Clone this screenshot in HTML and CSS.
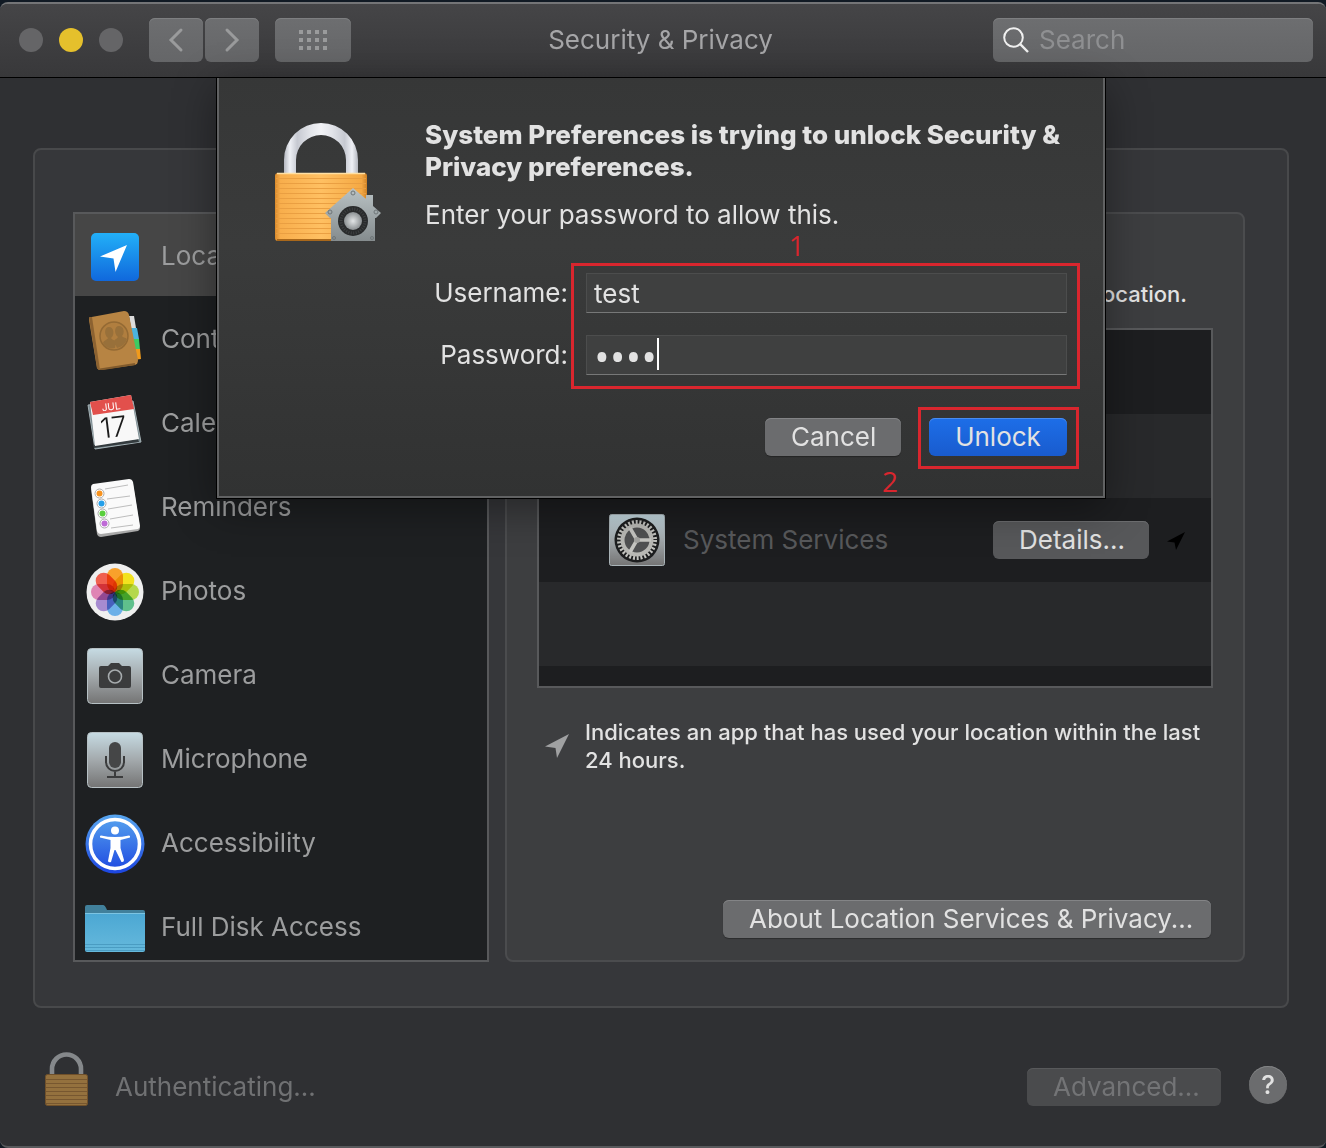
FILE: index.html
```html
<!DOCTYPE html>
<html lang="en">
<head>
    <meta charset="UTF-8">
    <meta name="viewport" content="width=device-width, initial-scale=1.0">
    <title>Security &amp; Privacy</title>
    <link rel="stylesheet" href="styles.css">
</head>
<body>

    <div class="window">

        <header class="titlebar">
            <div class="lights">
                <span class="light"></span>
                <span class="light light-minimize"></span>
                <span class="light"></span>
            </div>
            <div class="nav">
                <button type="button" class="tool" aria-label="Back">
                    <svg width="16" height="26" viewBox="0 0 16 26"><path d="M13 3 3 13l10 10" fill="none" stroke="#9a9b9c" stroke-width="3" stroke-linecap="round"/></svg>
                </button>
                <button type="button" class="tool" aria-label="Forward">
                    <svg width="16" height="26" viewBox="0 0 16 26"><path d="M3 3l10 10L3 23" fill="none" stroke="#9a9b9c" stroke-width="3" stroke-linecap="round"/></svg>
                </button>
            </div>
            <button type="button" class="tool tool-wide" aria-label="Show All">
                <svg width="28" height="20" viewBox="0 0 28 20"><path d="M0 2h28M0 10h28M0 18h28" stroke="#9a9b9c" stroke-width="4" stroke-dasharray="4 4"/></svg>
            </button>
            <h1>Security &amp; Privacy</h1>
            <div class="search">
                <svg width="26" height="26" viewBox="0 0 26 26"><circle cx="10.500" cy="10.500" r="9.300" fill="none" stroke="#f0f0f0" stroke-width="2"/><path d="M17.200 17.200 25 25" stroke="#f0f0f0" stroke-width="2.400"/></svg>
                <input type="text" placeholder="Search" aria-label="Search">
            </div>
        </header>

        <main class="panel">
            <ul class="sidebar">
                <li class="selected">
                    <svg width="60" height="60" viewBox="0 0 60 60">
                        <defs><linearGradient id="locBg" x1="0" y1="0" x2="0" y2="1"><stop offset="0" stop-color="#22b0f8"/><stop offset="1" stop-color="#1068dc"/></linearGradient></defs>
                        <rect x="6" y="6" width="48" height="48" rx="5" fill="url(#locBg)"/>
                        <path d="M42 18 30.500 45 28.500 31.500 15 29.500z" fill="#fff"/>
                    </svg>
                    <span>Location Services</span>
                </li>
                <li>
                    <svg width="60" height="60" viewBox="0 0 60 60">
                        <path d="M44 6h5l2 12h-5z" fill="#dcdcdc"/>
                        <path d="M45 18h7l2 11h-7z" fill="#4bb3dd"/>
                        <path d="M46 29h8l1 11h-7z" fill="#3fcb62"/>
                        <path d="M48 39h7l1 10-8 1z" fill="#f09a1c"/>
                        <path d="M4 7.500 39 1q4 0 5 4l9 45q0 4-3 5L15 60q-2 0-3-2L4 10z" fill="#b78443"/>
                        <path d="M4 7.500 7 7l8 53q-2 0-3-2z" fill="#8c6231"/>
                        <path d="M15 59.500 50 54" stroke="#805a2c" stroke-width="2"/>
                        <circle cx="29" cy="26" r="14" fill="#b07e3f" stroke="#946a34" stroke-width="1.500"/>
                        <path d="M18 33c1-3 4-3 5-5-4-3-4-11 1-11s6 8 2 11c1 2 4 2 5 4l-1 6q-8 2-12-5zM29 31c1-2 3-2 4-4-4-3-4-11 1-11s6 7 3 10c1 2 3 1 5 3q-2 7-10 9z" fill="#98703a"/>
                    </svg>
                    <span>Contacts</span>
                </li>
                <li>
                    <svg width="60" height="60" viewBox="0 0 60 60">
                        <path d="M3 11 48 7l8 41-46 7z" fill="#7b8b91" stroke="#a4b1b5"/>
                        <path d="M8 51 53 45l1 3-45 6z" fill="#343b3e"/>
                        <path d="M5 8 46 1l8 44-44 7z" fill="#f8f8f8"/>
                        <path d="M5 8 46 1l3 14L8 21z" fill="#e2504c"/>
                        <g transform="rotate(-7 28 28)" fill="#fff" font-family="Inter, sans-serif">
                            <text x="28" y="16" font-size="10" text-anchor="middle">JUL</text>
                            <text x="28" y="43" font-size="28" font-weight="300" text-anchor="middle" fill="#1b1b1b">17</text>
                        </g>
                    </svg>
                    <span>Calendars</span>
                </li>
                <li>
                    <svg width="60" height="60" viewBox="0 0 60 60">
                        <path d="M8 8 44 3q3 0 4 3l7 44q0 2-2 3l-37 6q-3 0-4-3L6 11q0-2 2-3z" fill="#a9a9a9"/>
                        <path d="M8 6 44 1q3 0 4 3l7 44q0 2-2 3l-37 5q-3 0-4-3L6 9q0-2 2-3z" fill="#fafafa"/>
                        <path d="M20 11 43 7M22 21l23-3M23 31l24-4M25 41l23-4M26 50l22-3" stroke="#bdbdbd"/>
                        <g fill="#fff" stroke="#aaa"><circle cx="14.500" cy="15.500" r="4.500"/><circle cx="16.500" cy="25.500" r="4.500"/><circle cx="17.500" cy="35.500" r="4.500"/><circle cx="19.500" cy="45.500" r="4.500"/></g>
                        <circle cx="14.500" cy="15.500" r="3" fill="#f6921e"/><circle cx="16.500" cy="25.500" r="3" fill="#259fe9"/><circle cx="17.500" cy="35.500" r="3" fill="#59cf3c"/><circle cx="19.500" cy="45.500" r="3" fill="#bf6bd6"/>
                    </svg>
                    <span>Reminders</span>
                </li>
                <li>
                    <svg width="60" height="60" viewBox="0 0 60 60">
                        <circle cx="30" cy="30" r="28.500" fill="#efefef"/>
                        <g class="petals">
                            <rect x="22" y="6" width="16" height="24" rx="8" fill="#f9a12b"/>
                            <rect x="22" y="6" width="16" height="24" rx="8" fill="#f2e21f" transform="rotate(45 30 30)"/>
                            <rect x="22" y="6" width="16" height="24" rx="8" fill="#b5d84c" transform="rotate(90 30 30)"/>
                            <rect x="22" y="6" width="16" height="24" rx="8" fill="#5fc08c" transform="rotate(135 30 30)"/>
                            <rect x="22" y="6" width="16" height="24" rx="8" fill="#6cb0e8" transform="rotate(180 30 30)"/>
                            <rect x="22" y="6" width="16" height="24" rx="8" fill="#a68bd0" transform="rotate(225 30 30)"/>
                            <rect x="22" y="6" width="16" height="24" rx="8" fill="#df85b4" transform="rotate(270 30 30)"/>
                            <rect x="22" y="6" width="16" height="24" rx="8" fill="#f0604f" transform="rotate(315 30 30)"/>
                        </g>
                    </svg>
                    <span>Photos</span>
                </li>
                <li>
                    <svg width="60" height="60" viewBox="0 0 60 60">
                        <defs><linearGradient id="steel" x1="0" y1="0" x2="0" y2="1"><stop offset="0" stop-color="#c6dbe3"/><stop offset="0.500" stop-color="#a3a9ac"/><stop offset="1" stop-color="#747474"/></linearGradient></defs>
                        <rect x="2.500" y="2.500" width="55" height="55" rx="4" fill="url(#steel)" stroke="#b6c0c4"/>
                        <path d="M16 20h7l3-3h8l3 3h7q2 0 2 2v18q0 2-2 2H16q-2 0-2-2V22q0-2 2-2z" fill="#3b3c3d"/>
                        <circle cx="30" cy="30.500" r="6.500" fill="none" stroke="#a6abad" stroke-width="1.600"/>
                    </svg>
                    <span>Camera</span>
                </li>
                <li>
                    <svg width="60" height="60" viewBox="0 0 60 60">
                        <rect x="2.500" y="2.500" width="55" height="55" rx="4" fill="url(#steel)" stroke="#b6c0c4"/>
                        <rect x="24" y="12" width="12" height="26" rx="6" fill="#454647"/>
                        <path d="M21 26v6a9 9 0 0 0 18 0v-6M30 41v6M22 47h16" fill="none" stroke="#3b3c3d" stroke-width="2"/>
                    </svg>
                    <span>Microphone</span>
                </li>
                <li>
                    <svg width="60" height="60" viewBox="0 0 60 60">
                        <defs><linearGradient id="accBg" x1="0" y1="0" x2="0" y2="1"><stop offset="0" stop-color="#58a6ef"/><stop offset="1" stop-color="#1c45e0"/></linearGradient></defs>
                        <circle cx="30" cy="30" r="29.500" fill="url(#accBg)"/>
                        <circle cx="30" cy="30" r="24.500" fill="none" stroke="#fff" stroke-width="3.600"/>
                        <circle cx="30" cy="16.500" r="4" fill="#fff"/>
                        <path d="M16 21.500q14 3 28 0 1.500 0 1 2l-9.500 2.500v8l3.500 12q0 2.500-2.500 2L30.500 36h-1L26 48q-2.500 1-3-1l2.500-13v-8L15 23.500q-.5-2 1-2z" fill="#fff"/>
                    </svg>
                    <span>Accessibility</span>
                </li>
                <li>
                    <svg width="60" height="60" viewBox="0 0 60 60">
                        <defs><linearGradient id="folderBg" x1="0" y1="0" x2="0" y2="1"><stop offset="0" stop-color="#4ba7d3"/><stop offset="1" stop-color="#66b9dc"/></linearGradient></defs>
                        <path d="M0 9q0-2 2-2h16q2 0 4 5h36q2 0 2 2v10H0z" fill="#41809b"/>
                        <path d="M0 15h60v37q0 2-2 2H2q-2 0-2-2z" fill="url(#folderBg)"/>
                        <path d="M0 15.500h60" stroke="#7cc4e2"/>
                        <path d="M0 46.500h60M0 49.500h60M0 52.500h60" stroke="#4a9cc2"/>
                    </svg>
                    <span>Full Disk Access</span>
                </li>
            </ul>

            <section class="detail">
                <p class="hint">Allow the apps below to determine your location.</p>
                <ul class="apps">
                    <li></li>
                    <li></li>
                    <li>
                        <svg width="56" height="56" viewBox="0 0 56 56">
                            <rect x=".5" y="2.500" width="55" height="51" rx="2" fill="url(#steel)" stroke="#a9b3b7"/>
                            <circle cx="28" cy="28" r="22.500" fill="#1d1e1f"/>
                            <circle cx="28" cy="28" r="18" fill="none" stroke="#c3c3bf" stroke-width="4" stroke-dasharray="2 1.770"/>
                            <circle cx="28" cy="28" r="14.500" fill="#505152" stroke="#b9b9b5" stroke-width="4"/>
                            <path d="M28 28h14M28 28l-7-12M28 28l-7 12" stroke="#c6c6c2" stroke-width="3.600"/>
                            <circle cx="28" cy="28" r="3" fill="#a4a4a1"/>
                        </svg>
                        <span>System Services</span>
                        <button type="button" class="button button-dim">Details...</button>
                        <svg class="arrow" width="20" height="20" viewBox="0 0 20 20"><path d="M19 2 10 20 8.500 12.500 1 11.500z" fill="#000"/></svg>
                    </li>
                    <li></li>
                    <li></li>
                </ul>
                <div class="note">
                    <svg width="24" height="24" viewBox="0 0 24 24"><path d="M24 0 12 24 10.500 14 0 12.500z" fill="#a0a1a2"/></svg>
                    <p>Indicates an app that has used your location within the last 24 hours.</p>
                </div>
                <button type="button" class="button about">About Location Services &amp; Privacy...</button>
            </section>
        </main>

        <footer class="footer">
            <svg width="44" height="55" viewBox="0 0 44 55">
                <path d="M7 26V18a14.500 14.500 0 0 1 29 0v8" fill="none" stroke="#85888b" stroke-width="4.600"/>
                <rect x=".5" y="23.500" width="42" height="31" rx="2" fill="#94713e" stroke="#70502a"/>
                <path d="M1 28.500h41M1 32.500h41M1 36.500h41M1 40.500h41M1 44.500h41M1 48.500h41M1 52.500h41" stroke="#775730"/>
            </svg>
            <span class="status">Authenticating...</span>
            <button type="button" class="button advanced" disabled>Advanced...</button>
            <button type="button" class="help" aria-label="Help">?</button>
        </footer>

        <!-- Password sheet, hangs from the title bar -->
        <div class="overlay">
            <div class="sheet" role="dialog" aria-labelledby="sheetTitle">
                <svg class="sheet-icon" width="106" height="122" viewBox="0 0 106 122">
                    <defs>
                        <linearGradient id="shackle" x1="0" y1="0" x2="1" y2="0"><stop offset="0" stop-color="#b4b7bf"/><stop offset="0.080" stop-color="#eef0f5"/><stop offset="0.180" stop-color="#c6c9d1"/><stop offset="0.350" stop-color="#e2e4e9"/><stop offset="0.500" stop-color="#f2f3f6"/><stop offset="0.650" stop-color="#e2e4e9"/><stop offset="0.820" stop-color="#c6c9d1"/><stop offset="0.920" stop-color="#eef0f5"/><stop offset="1" stop-color="#b4b7bf"/></linearGradient>
                        <linearGradient id="brass" x1="0" y1="0" x2="1" y2="0"><stop offset="0" stop-color="#d98a2c"/><stop offset="0.060" stop-color="#f8ae4c"/><stop offset="0.500" stop-color="#ffc062"/><stop offset="0.940" stop-color="#f5a944"/><stop offset="1" stop-color="#cf8226"/></linearGradient>
                        <linearGradient id="house" x1="0" y1="0" x2="0" y2="1"><stop offset="0" stop-color="#b9c2c4"/><stop offset="1" stop-color="#858c8e"/></linearGradient>
                        <radialGradient id="knob"><stop offset="0" stop-color="#e2e5e6"/><stop offset="1" stop-color="#8b9092"/></radialGradient>
                    </defs>
                    <path d="M9 54V38a37 37 0 0 1 74 0v16H71V38a25 25 0 0 0-50 0v16z" fill="url(#shackle)"/>
                    <rect x="0" y="51" width="92" height="68" rx="3" fill="url(#brass)"/>
                    <path d="M1 56.500h90M1 61.500h90M1 66.500h90M1 71.500h90M1 76.500h90M1 81.500h90M1 86.500h90M1 91.500h90M1 96.500h90M1 101.500h90M1 106.500h90M1 111.500h90" stroke="#ea9f42"/>
                    <path d="M2 51.500h88" stroke="#ffe0a4" stroke-width="1.500"/>
                    <path d="M2 118h88" stroke="#a9681b" stroke-width="2"/>
                    <path d="M78 66 91 77v-4h7v11l8 7-5 5h-1v23H56V96h-1l-5-5z" fill="url(#house)"/>
                    <g fill="none" stroke="#6f7678"><circle cx="78" cy="71" r="2"/><circle cx="55" cy="90" r="2"/><circle cx="101" cy="90" r="2"/><circle cx="59" cy="116" r="1.500"/><circle cx="97" cy="116" r="1.500"/></g>
                    <circle cx="78" cy="99" r="15" fill="#292b2c"/>
                    <circle cx="78" cy="99" r="12" fill="none" stroke="#3e4142" stroke-width="3" stroke-dasharray="1 1.500"/>
                    <circle cx="78" cy="99" r="9" fill="url(#knob)"/>
                </svg>
                <form class="sheet-form">
                    <h2 id="sheetTitle">System Preferences is trying to unlock Security &amp; Privacy preferences.</h2>
                    <p>Enter your password to allow this.</p>
                    <div class="fields">
                        <label for="username">Username:</label>
                        <input type="text" id="username" value="test">
                        <label for="password">Password:</label>
                        <div class="password">
                            <input type="password" id="password" value="test">
                            <span class="caret"></span>
                        </div>
                        <span class="mark mark-fields"></span>
                        <span class="step step-one">1</span>
                    </div>
                    <div class="actions">
                        <button type="button" class="button cancel">Cancel</button>
                        <div class="unlock-wrap">
                            <button type="submit" class="button unlock">Unlock</button>
                            <span class="mark mark-unlock"></span>
                            <span class="step step-two">2</span>
                        </div>
                    </div>
                </form>
            </div>
        </div>

    </div>

</body>
</html>
```

FILE: styles.css
```css
* {
    box-sizing: border-box;
}

body {
    margin: 0;
    padding: 2px 0 0;
    background: #111a24;
    color: #e2e2e2;
    font-family: Inter, "Liberation Sans", sans-serif;
    font-size: 26px;
}

h1, h2, p, ul {
    margin: 0;
    padding: 0;
}

ul {
    list-style: none;
}

svg {
    display: block;
    flex: none;
}

button, input {
    font: inherit;
    color: inherit;
    border: none;
    padding: 0;
}

.window {
    position: relative;
    display: flex;
    flex-direction: column;
    min-height: calc(100vh - 2px);
    background: #2f3033;
    border-top: 2px solid #747577;
    border-bottom: 2px solid #58595c;
    border-radius: 8px;
    overflow: hidden;
}

/* Title bar */
.titlebar {
    display: flex;
    align-items: center;
    height: 74px;
    padding: 0 13px 2px 19px;
    background: linear-gradient(#454547, #38383a);
    border-bottom: 1px solid #000;
}

.lights {
    display: flex;
    gap: 16px;
    margin-right: 26px;
}

.light {
    width: 24px;
    height: 24px;
    border-radius: 50%;
    background: #656567;
}

.light-minimize {
    background: #e5c02c;
}

.nav {
    display: flex;
    gap: 2px;
    margin-right: 16px;
}

.tool {
    display: flex;
    align-items: center;
    justify-content: center;
    width: 54px;
    height: 44px;
    border-radius: 6px;
    background: linear-gradient(#6d6e70, #656668);
    box-shadow: inset 0 1px #7e7f81;
}

.tool-wide {
    width: 76px;
}

.titlebar h1 {
    flex: 1;
    margin-right: 23px;
    font-size: 26px;
    font-weight: 400;
    text-align: center;
    color: #a6a6a8;
}

.search {
    display: flex;
    align-items: center;
    gap: 10px;
    width: 320px;
    height: 44px;
    padding: 0 10px;
    border-radius: 6px;
    background: linear-gradient(#6d6e70, #656668);
    box-shadow: inset 0 1px #7e7f81;
}

.search input {
    flex: 1;
    min-width: 0;
    background: none;
}

.search input::placeholder {
    color: #8f9092;
    opacity: 1;
}

/* Privacy panel */
.panel {
    display: flex;
    gap: 16px;
    margin: 70px 37px 0 33px;
    padding: 62px 42px 44px 38px;
    background: #36373a;
    border: 2px solid #48494b;
    border-radius: 8px;
}

.sidebar {
    flex: none;
    width: 416px;
    height: 750px;
    overflow: hidden;
    background: #1e2022;
    border: 2px solid #58595b;
    color: #9c9d9e;
}

.sidebar li {
    display: flex;
    align-items: center;
    gap: 16px;
    height: 84px;
    padding-left: 10px;
}

.sidebar svg {
    margin-top: 4px;
}

.sidebar .selected {
    height: 82px;
    background: #464646;
}

.petals {
    isolation: isolate;
}

.petals rect {
    mix-blend-mode: multiply;
}

.detail {
    display: flex;
    flex-direction: column;
    flex: 1;
    padding: 66px 30px 22px;
    background: #3d3e40;
    border: 2px solid #4b4c4e;
    border-radius: 8px;
    font-size: 22px;
    font-weight: 500;
    line-height: 28px;
}

.hint {
    padding-right: 26px;
    text-align: right;
}

.apps {
    height: 360px;
    margin-top: 20px;
    overflow: hidden;
    border: 2px solid #58595b;
    background: #1d1e20;
    font-size: 26px;
    font-weight: 400;
    color: #58595b;
}

.apps li {
    display: flex;
    align-items: center;
    height: 84px;
    padding: 0 25px 0 70px;
}

.apps li:nth-child(even) {
    background: #28292b;
}

.apps span {
    flex: 1;
    margin-left: 18px;
}

.arrow {
    margin-left: 17px;
}

.note {
    display: flex;
    align-items: center;
    gap: 16px;
    margin: 30px 0 0 8px;
}

.button {
    height: 38px;
    padding: 0 26px;
    border-radius: 6px;
    background: #6b6c6e;
    box-shadow: inset 0 1px #838486, 0 1px 1px rgba(0, 0, 0, 0.3);
    font-size: 26px;
    font-weight: 400;
    line-height: 38px;
    white-space: nowrap;
}

.button-dim {
    width: 156px;
    background: #57585a;
    box-shadow: inset 0 1px #6c6d6f;
    color: #e2e2e2;
}

.about {
    align-self: flex-end;
    width: 488px;
    margin: auto 2px 0 0;
}

/* Footer */
.footer {
    display: flex;
    align-items: flex-end;
    padding: 43px 39px 38px 45px;
    line-height: 38px;
}

.status {
    flex: 1;
    margin-left: 26px;
    color: #707173;
}

.advanced {
    width: 194px;
    margin-right: 28px;
    background: #4a4b4d;
    box-shadow: inset 0 1px #58595b;
    color: #737476;
}

.help {
    width: 38px;
    height: 38px;
    margin-bottom: 2px;
    border-radius: 50%;
    background: #6b6c6e;
    box-shadow: inset 0 1px #838486;
    font-weight: 500;
}

/* Password sheet */
.overlay {
    position: absolute;
    top: 74px;
    left: 0;
    right: 4px;
    display: flex;
    justify-content: center;
}

.sheet {
    display: flex;
    gap: 44px;
    width: 888px;
    padding: 41px 36px 40px 56px;
    background: linear-gradient(#363737, #3a3b3b 40%, #313232);
    border: 2px solid #616263;
    border-top: none;
    box-shadow: 0 0 0 1px #000, 0 10px 40px rgba(0, 0, 0, 0.4);
}

.sheet-icon {
    margin-top: 3px;
}

.sheet-form {
    flex: 1;
    line-height: 32px;
}

.sheet-form h2 {
    margin-bottom: 16px;
    font-size: 26px;
    font-weight: 800;
}

.fields {
    position: relative;
    display: grid;
    grid-template-columns: 143px 1fr;
    align-items: center;
    gap: 22px 18px;
    margin-top: 42px;
}

.fields label {
    text-align: right;
}

.fields input {
    display: block;
    width: 100%;
    height: 40px;
    padding: 0 7px;
    background: #3f4040;
    border: 1px solid #4c4d4d;
    border-bottom: 1px solid #777878;
    outline: none;
}

.password {
    position: relative;
}

/* Larger face so that the dots fill the field */
.fields input[type="password"] {
    font-family: "Open Sans", sans-serif;
    font-size: 42px;
}

.caret {
    position: absolute;
    top: 3px;
    left: 71px;
    width: 2px;
    height: 32px;
    background: #fff;
}

.actions {
    display: flex;
    justify-content: flex-end;
    gap: 28px;
    margin-top: 43px;
}

.cancel {
    width: 136px;
}

.unlock-wrap {
    position: relative;
}

.unlock {
    width: 138px;
    background: linear-gradient(#1d6ee8, #195bce);
    box-shadow: inset 0 1px #4a8cf0;
}

/* Step marks */
.mark {
    position: absolute;
    border: 3px solid #d9262e;
    pointer-events: none;
}

.mark-fields {
    inset: -10px -13px -14px 146px;
}

.mark-unlock {
    inset: -11px -12px -13px -11px;
}

.step {
    position: absolute;
    color: #d9262e;
    font-family: "Open Sans", sans-serif;
    font-size: 28px;
    line-height: 24px;
}

.step-one {
    top: -40px;
    left: 364px;
}

.step-two {
    top: 51px;
    left: -47px;
}
```
